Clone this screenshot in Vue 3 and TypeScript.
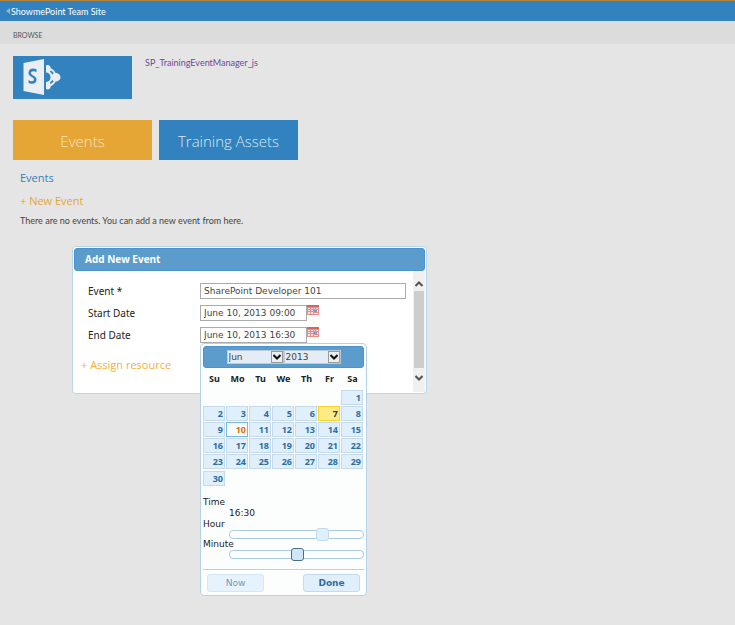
<script setup lang="ts">
import { ref, computed } from 'vue'

const tab = ref('Events')
const tabs = ['Events', 'Training Assets']
const eventName = ref('SharePoint Developer 101')
const startDate = ref('June 10, 2013 09:00')
const endDate = ref('June 10, 2013 16:30')
const month = ref('Jun')
const year = ref('2013')
const day = ref(10)
const hour = ref(16)
const minute = ref(30)
const today = 7

const months = ['Jan', 'Feb', 'Mar', 'Apr', 'May', 'Jun', 'Jul', 'Aug', 'Sep', 'Oct', 'Nov', 'Dec']
const years = ['2012', '2013', '2014']
const weekdays = ['Su', 'Mo', 'Tu', 'We', 'Th', 'Fr', 'Sa']

const weeks = computed<number[][]>(() => {
  const m = months.indexOf(month.value)
  const first = new Date(Number(year.value), m, 1).getDay()
  const count = new Date(Number(year.value), m + 1, 0).getDate()
  const rows: number[][] = []
  for (let start = 1 - first; start <= count; start += 7) {
    rows.push(weekdays.map((_, i) => (start + i > 0 && start + i <= count ? start + i : 0)))
  }
  return rows
})

const time = computed(
  () => `${String(hour.value).padStart(2, '0')}:${String(minute.value).padStart(2, '0')}`,
)
</script>

<template>
  <div class="page">
    <header class="suite">
      <svg class="back" viewBox="0 0 4 6" aria-hidden="true"><path d="M4 0v6L0 3z" /></svg>
      <a href="#">ShowmePoint Team Site</a>
    </header>
    <nav class="ribbon"><a href="#">BROWSE</a></nav>

    <main>
      <div class="brand">
        <a href="#" class="logo" aria-label="Home">
          <svg viewBox="0 0 40 38" aria-hidden="true">
            <path class="paper" d="M1.500 5 22 1v36L1.500 33z" />
            <path class="letter" d="M14.5 14.1c-1-.6-2.1-.9-3.2-.9-1.500 0-2.300.7-2.300 1.800 0 2.800 5.500 2.400 5.500 6.700 0 2.500-1.700 4-4.500 4-1.300 0-2.600-.3-3.400-.8v-2.900c1 .8 2.100 1.200 3.200 1.200 1.400 0 2.100-.6 2.100-1.700 0-2.900-5.400-2.500-5.400-6.800 0-2.500 1.900-4.100 4.700-4.100 1.200 0 2.400.2 3.300.6z" />
            <path class="paper" d="M24 7.500c2.500-1.300 4.800.2 4.700 2.700 2 .8 3.700 2.300 4.900 4.700 2.500 0 4.900 1.800 4.900 4.300s-2.400 4.300-4.900 4.300c-1.200 2.400-2.900 3.900-4.900 4.700.1 2.500-2.200 4-4.700 2.700v-7c2.700 0 4.500-1.900 4.500-4.700S26.700 14.500 24 14.500z" />
            <path class="letter" d="M28.500 12.500c1.500.6 2.500 1.500 3.200 2.700l-1.400 1.500c-.5-1.200-1.200-2-2.300-2.600zM28.500 25.900c1.500-.6 2.500-1.500 3.200-2.700l-1.400-1.500c-.5 1.200-1.200 2-2.300 2.600z" />
          </svg>
        </a>
        <a href="#" class="app-name">SP_TrainingEventManager_js</a>
      </div>

      <div class="tiles">
        <button v-for="t in tabs" :key="t" type="button" :class="{ active: t === tab }" @click="tab = t">
          {{ t }}
        </button>
      </div>

      <section class="events">
        <h1>Events</h1>
        <button type="button" class="add">+ New Event</button>
        <p>There are no events. You can add a new event from here.</p>
      </section>
    </main>

    <section class="dialog" role="dialog" aria-labelledby="dialog-title">
      <h2 id="dialog-title">Add New Event</h2>
      <div class="dialog-body">
        <form @submit.prevent>
          <div class="field">
            <label for="event">Event *</label>
            <input id="event" v-model="eventName" type="text" />
          </div>
          <div class="field">
            <label for="start">Start Date</label>
            <input id="start" v-model="startDate" class="date" type="text" />
            <button type="button" class="cal" aria-label="Pick start date">
              <svg viewBox="0 0 12 10" aria-hidden="true">
                <path fill="#e58f8a" d="M0 0h12v10H0z" />
                <path fill="#d9635c" d="M0 0h12v2H0z" />
                <path fill="#fbe1de" d="M1 3h2v1H1zM4 3h2v1H4zM7 3h1v1H7zM9 3h2v1H9zM1 5h2v1H1zM4 5h2v1H4zM10 5h1v2h-1zM1 7h2v2H1zM4 7h2v2H4zM7 8h4v1H7z" />
                <path fill="#8296e0" d="M7 5h3v2H7z" />
              </svg>
            </button>
          </div>
          <div class="field">
            <label for="end">End Date</label>
            <input id="end" v-model="endDate" class="date" type="text" />
            <button type="button" class="cal" aria-label="Pick end date">
              <svg viewBox="0 0 12 10" aria-hidden="true">
                <path fill="#e58f8a" d="M0 0h12v10H0z" />
                <path fill="#d9635c" d="M0 0h12v2H0z" />
                <path fill="#fbe1de" d="M1 3h2v1H1zM4 3h2v1H4zM7 3h1v1H7zM9 3h2v1H9zM1 5h2v1H1zM4 5h2v1H4zM10 5h1v2h-1zM1 7h2v2H1zM4 7h2v2H4zM7 8h4v1H7z" />
                <path fill="#8296e0" d="M7 5h3v2H7z" />
              </svg>
            </button>
          </div>
          <button type="button" class="add assign">+ Assign resource</button>
        </form>
        <div class="scroll">
          <button type="button" aria-label="Scroll up">
            <svg viewBox="0 0 8 6" aria-hidden="true"><path d="M.5 5 4 1.500 7.500 5" /></svg>
          </button>
          <div class="thumb"></div>
          <button type="button" aria-label="Scroll down">
            <svg viewBox="0 0 8 6" aria-hidden="true"><path d="M.5 1 4 4.500 7.500 1" /></svg>
          </button>
        </div>
      </div>
    </section>

    <section class="picker" aria-label="Date and time">
      <div class="picker-head">
        <div class="pick">
          <select v-model="month" aria-label="Month">
            <option v-for="m in months" :key="m">{{ m }}</option>
          </select>
          <span class="arrow"><svg viewBox="0 0 8 6" aria-hidden="true"><path d="M.5 1 4 4.500 7.500 1" /></svg></span>
        </div>
        <div class="pick">
          <select v-model="year" aria-label="Year">
            <option v-for="y in years" :key="y">{{ y }}</option>
          </select>
          <span class="arrow"><svg viewBox="0 0 8 6" aria-hidden="true"><path d="M.5 1 4 4.500 7.500 1" /></svg></span>
        </div>
      </div>
      <table>
        <thead>
          <tr><th v-for="w in weekdays" :key="w" scope="col">{{ w }}</th></tr>
        </thead>
        <tbody>
          <tr v-for="(week, i) in weeks" :key="i">
            <td v-for="(d, j) in week" :key="j">
              <button v-if="d" type="button" :class="{ today: d === today, selected: d === day }" @click="day = d">{{ d }}</button>
            </td>
          </tr>
        </tbody>
      </table>
      <div class="time">
        <span>Time</span>
        <output>{{ time }}</output>
        <label for="hour">Hour</label>
        <div class="track"><input id="hour" v-model.number="hour" type="range" min="0" max="23" /></div>
        <label for="minute">Minute</label>
        <div class="track"><input id="minute" v-model.number="minute" class="focused" type="range" min="0" max="59" /></div>
      </div>
      <footer>
        <button type="button" class="now">Now</button>
        <button type="button">Done</button>
      </footer>
    </section>
  </div>
</template>

<style>
body {
  margin: 0;
  background: #e5e5e5;
}
</style>

<style scoped>
.page,
.page * {
  box-sizing: border-box;
}
.page {
  position: relative;
  min-height: 100vh;
  font-family: Lato, "Open Sans", sans-serif;
  font-size: 9px;
  color: #444;
}
a {
  color: inherit;
  text-decoration: none;
}
button {
  padding: 0;
  border: 0;
  background: none;
  font: inherit;
  color: inherit;
  cursor: pointer;
}
svg {
  display: block;
}
.suite {
  display: flex;
  align-items: center;
  gap: 1px;
  height: 21px;
  padding-left: 6px;
  border-top: 1px solid #b5843c;
  background: #3182be;
  color: #fff;
}
.back {
  width: 4px;
  height: 6px;
  fill: #9ab4c8;
}
.ribbon {
  display: flex;
  align-items: center;
  height: 23px;
  padding: 5px 13px 0;
  background: #dcdcdc;
  font-size: 7px;
  color: #555;
}
main {
  padding: 12px 13px;
}
.brand {
  display: flex;
  gap: 13px;
}
.logo {
  width: 119px;
  height: 43px;
  padding: 2px 9px;
  background: #3182be;
}
.logo svg {
  width: 40px;
  height: 38px;
}
.paper {
  fill: #e9eef2;
}
.letter {
  fill: #3182be;
}
.app-name {
  line-height: 13px;
  color: #6f479d;
}
.tiles {
  display: flex;
  gap: 7px;
  margin-top: 21px;
}
.tiles button {
  width: 139px;
  height: 40px;
  padding-top: 2px;
  background: #3182be;
  color: #dbe8f2;
  font-family: "Open Sans", sans-serif;
  font-size: 15px;
  font-weight: 300;
}
.tiles .active {
  background: #e6a635;
  color: #f5e3c2;
}
.events {
  padding: 10px 7px;
}
h1 {
  margin: 0;
  font: 400 11px/16px "Open Sans", sans-serif;
  color: #3182be;
}
.add {
  display: block;
  margin-top: 7px;
  font: 11px/16px "Open Sans", sans-serif;
  color: #e6a635;
}
.events p {
  margin: 6px 0 0;
  line-height: 12px;
}
.dialog {
  position: absolute;
  top: 246px;
  left: 72px;
  width: 355px;
  padding: 1px;
  border: 1px solid #b9d7ea;
  border-radius: 4px;
  background: #fff;
  color: #222;
}
h2 {
  margin: 0;
  padding: 0 10px;
  border: 1px solid #4b93cc;
  border-radius: 3px;
  background: #5c9ccc;
  color: #fff;
  font: 700 10px/21px "Open Sans", sans-serif;
}
.dialog-body {
  display: flex;
  height: 121px;
}
form {
  display: flex;
  flex: 1;
  flex-direction: column;
  gap: 6px;
  padding: 12px 7px 0 14px;
}
.field {
  display: flex;
  align-items: center;
  height: 16px;
}
.field label {
  width: 112px;
  font: 10px "Noto Sans", sans-serif;
}
.field input {
  flex: 1;
  min-width: 0;
  height: 16px;
  padding: 0 3px;
  border: 1px solid #ababab;
  background: #fff;
  font: 9px "DejaVu Sans", sans-serif;
  color: #444;
}
.field .date {
  flex: none;
  width: 107px;
}
.cal {
  align-self: flex-start;
  width: 12px;
  height: 10px;
}
.assign {
  margin: 8px 0 0 -7px;
  color: #f5b03a;
  text-align: left;
}
.scroll {
  display: flex;
  flex-direction: column;
  width: 12px;
  padding-bottom: 4px;
  background: #f0f0f0;
}
.scroll button {
  display: grid;
  place-items: center;
  height: 20px;
}
.scroll button:first-child {
  padding-top: 5px;
}
.scroll svg {
  width: 8px;
  height: 6px;
}
.scroll path,
.arrow path {
  fill: none;
  stroke: #555;
  stroke-width: 2;
}
.thumb {
  flex: 1;
  margin: 0 1px;
  background: #cdcdcd;
}
.picker {
  position: absolute;
  top: 343px;
  left: 200px;
  width: 167px;
  padding: 2px;
  border: 1px solid #b4d3e8;
  border-radius: 4px;
  background: #fcfdfd;
  color: #222;
  font-family: "DejaVu Sans", sans-serif;
}
.picker-head {
  display: flex;
  justify-content: center;
  height: 22px;
  padding: 3px 0;
  border: 1px solid #4b93cc;
  border-radius: 3px;
  background: #5c9ccc;
}
.pick {
  display: flex;
  width: 57px;
  height: 14px;
  border: 1px solid #b9c9d6;
  background: #e4edf5;
}
.pick select {
  flex: 1;
  min-width: 0;
  padding: 0 1px;
  border: 0;
  appearance: none;
  background: none;
  font: 9px/12px "DejaVu Sans", sans-serif;
  color: #444;
}
.arrow {
  display: grid;
  place-items: center;
  width: 12px;
  border: 1px solid #999;
  background: #eee;
  pointer-events: none;
}
.arrow svg {
  width: 8px;
  height: 6px;
}
.arrow path {
  stroke: #111;
}
table {
  width: 100%;
  border-collapse: collapse;
  table-layout: fixed;
}
th {
  height: 22px;
  padding: 0 0 2px;
  font: 700 9px "Noto Sans", sans-serif;
}
tr td {
  height: 16px;
  padding: 0 1px 1px 0;
}
tbody tr:last-child td {
  height: 17px;
}
td button {
  display: block;
  width: 100%;
  height: 15px;
  padding-right: 1px;
  border: 1px solid #c5dbec;
  background: #dfeffc;
  color: #2e6e9e;
  font: 700 9px/13px "Noto Sans", sans-serif;
  text-align: right;
}
td .today {
  border-color: #fad42e;
  background: #fbec88;
  color: #363636;
}
td .selected {
  border-color: #79b7e7;
  background: #f8fbfd;
  color: #e17009;
}
.time {
  margin-top: 10px;
  line-height: 11px;
}
.time > span,
.time > label,
.time > output {
  display: block;
}
.time > output,
.track {
  margin-left: 26px;
}
.track {
  display: flex;
  align-items: center;
  height: 9px;
  border: 1px solid #a9cce4;
  border-radius: 4px;
}
.track input {
  flex: 1;
  height: 13px;
  margin: 0 -7px;
  appearance: none;
  background: none;
}
.track input::-webkit-slider-thumb {
  appearance: none;
  width: 13px;
  height: 13px;
  border: 1px solid #c5dbec;
  border-radius: 3px;
  background: #dfeffc;
}
.track .focused::-webkit-slider-thumb {
  border-color: #4c6d8a;
  background: #d0e5f5;
}
footer {
  display: flex;
  justify-content: space-between;
  margin-top: 10px;
  padding: 4px 4px 1px;
  border-top: 1px solid #b4d3e8;
}
footer button {
  width: 57px;
  height: 18px;
  border: 1px solid #c5dbec;
  border-radius: 3px;
  background: #dfeffc;
  color: #2e6e9e;
  font-size: 9px;
  font-weight: 700;
  line-height: 15px;
}
footer .now {
  font-weight: 400;
  opacity: 0.7;
}
</style>
